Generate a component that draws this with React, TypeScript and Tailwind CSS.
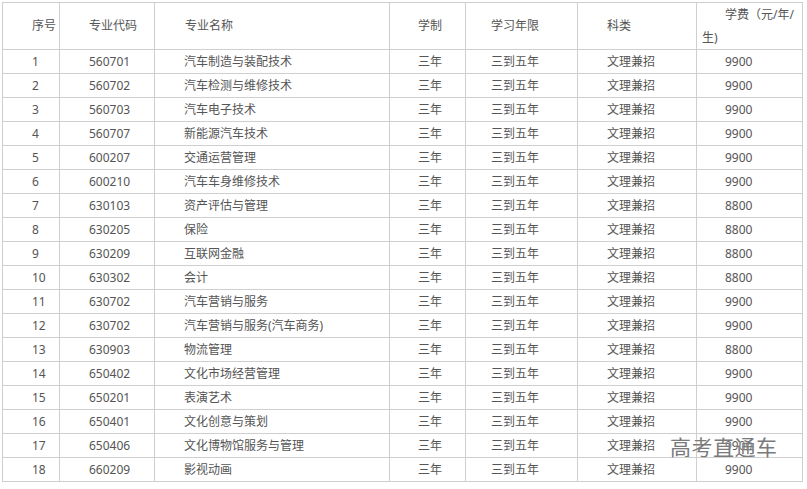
import React from 'react'

const rows: [string, string, string, string][] = [
  ['1', '560701', '汽车制造与装配技术', '9900'],
  ['2', '560702', '汽车检测与维修技术', '9900'],
  ['3', '560703', '汽车电子技术', '9900'],
  ['4', '560707', '新能源汽车技术', '9900'],
  ['5', '600207', '交通运营管理', '9900'],
  ['6', '600210', '汽车车身维修技术', '9900'],
  ['7', '630103', '资产评估与管理', '8800'],
  ['8', '630205', '保险', '8800'],
  ['9', '630209', '互联网金融', '8800'],
  ['10', '630302', '会计', '8800'],
  ['11', '630702', '汽车营销与服务', '9900'],
  ['12', '630702', '汽车营销与服务(汽车商务)', '9900'],
  ['13', '630903', '物流管理', '8800'],
  ['14', '650402', '文化市场经营管理', '9900'],
  ['15', '650201', '表演艺术', '9900'],
  ['16', '650401', '文化创意与策划', '9900'],
  ['17', '650406', '文化博物馆服务与管理', '9900'],
  ['18', '660209', '影视动画', '9900'],
]

const td = 'border border-[#cfcfcf] h-[24px] p-0 align-middle whitespace-nowrap'

export default function App() {
  return (
    <div
      className="relative w-[807px] h-[489px] bg-white pl-[2px] pt-[2px] text-[12px] text-[#555]"
      style={{ fontFamily: '"Noto Sans", "Noto Sans CJK SC", sans-serif' }}
    >
      <table className="table-fixed border-collapse w-[800px]">
        <colgroup>
          <col className="w-[57px]" />
          <col className="w-[95px]" />
          <col className="w-[235px]" />
          <col className="w-[76px]" />
          <col className="w-[112px]" />
          <col className="w-[119px]" />
          <col className="w-[106px]" />
        </colgroup>
        <thead>
          <tr className="h-[47px]">
            <th className={`${td} font-normal text-left pl-[29px]`}>序号</th>
            <th className={`${td} font-normal text-left pl-[29px]`}>专业代码</th>
            <th className={`${td} font-normal text-left pl-[30px]`}>专业名称</th>
            <th className={`${td} font-normal text-left pl-[28px]`}>学制</th>
            <th className={`${td} font-normal text-left pl-[25px]`}>学习年限</th>
            <th className={`${td} font-normal text-left pl-[29px]`}>科类</th>
            <th className="border border-[#cfcfcf] p-0 pl-[5px] pr-[4px] font-normal text-left leading-[23px] indent-[23px] whitespace-normal">
              学费（元/年/生)
            </th>
          </tr>
        </thead>
        <tbody>
          {rows.map(([n, code, name, fee]) => (
            <tr key={n}>
              <td className={`${td} pl-[29px]`}>{n}</td>
              <td className={`${td} pl-[29px]`}>{code}</td>
              <td className={`${td} pl-[29px]`}>{name}</td>
              <td className={`${td} pl-[28px]`}>三年</td>
              <td className={`${td} pl-[25px]`}>三到五年</td>
              <td className={`${td} pl-[29px]`}>文理兼招</td>
              <td className={`${td} pl-[28px]`}>{fee}</td>
            </tr>
          ))}
        </tbody>
      </table>

      {/* watermark */}
      <div
        className="absolute left-[670px] top-[437px] text-[21px] leading-none text-[#7a7a7a] tracking-[0.5px]"
        style={{ textShadow: '0 0 1px #fff' }}
      >
        高考直通车
      </div>
    </div>
  )
}
